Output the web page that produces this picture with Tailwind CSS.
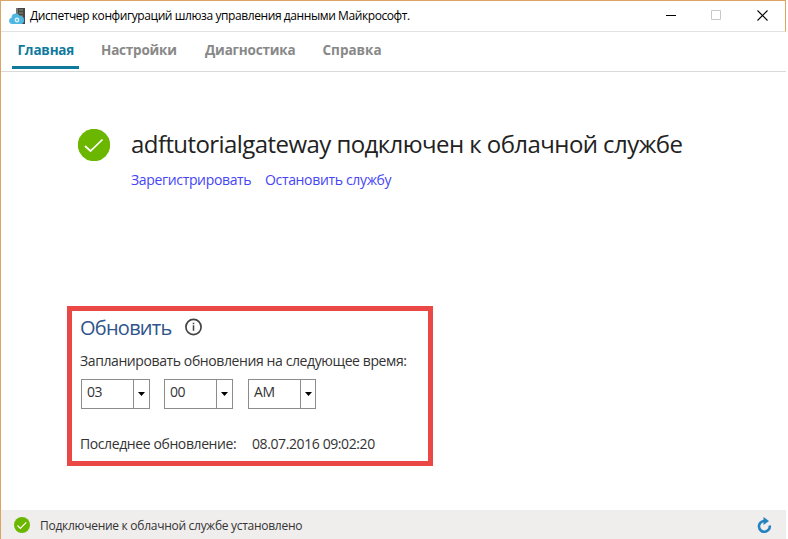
<!DOCTYPE html>
<html lang="ru">
<head>
<meta charset="utf-8">
<title>Диспетчер конфигураций шлюза управления данными Майкрософт.</title>
<script src="https://cdn.jsdelivr.net/npm/@tailwindcss/browser@4"></script>
</head>
<body class="bg-white overflow-hidden font-['Open_Sans','Noto_Sans',sans-serif] text-[#222]">
<div class="w-[786px] h-[539px] flex flex-col border-t border-l border-[#dba463] whitespace-nowrap">
  <header class="h-[31px] shrink-0 flex items-center border-r border-r-[#dba463] border-b border-b-[#e2e2e2] pl-2">
    <svg class="w-4 h-4 shrink-0 -mt-px" viewBox="0 0 16 16">
      <path d="M7 0h9v16H7z" fill="#454545"/><path d="M7 0h2v16H7z" fill="#777"/>
      <path d="M10 2h4M10 5h4M10 8h4" stroke="#8a9a70" stroke-width="1"/>
      <path d="M3 16a3.200 3.200 0 0 1-.5-6.300A4.500 4.500 0 0 1 11 8 4 4 0 0 1 15 12 3.800 3.800 0 0 1 13 16z" fill="#4fb8e2"/>
      <circle cx="8" cy="12" r="1.700" fill="none" stroke="#d9f1fb" stroke-width="1.400"/>
    </svg>
    <h1 class="ml-[5px] text-[12px] leading-4 tracking-[-0.41px] text-black">Диспетчер конфигураций шлюза управления данными Майкрософт.</h1>
    <div class="ml-auto mr-[17px] flex items-center">
      <svg class="w-[10px] h-[11px] mr-[35px]" viewBox="0 0 10 11" shape-rendering="crispEdges"><path d="M0 4.500h10" stroke="#000"/></svg>
      <svg class="w-[10px] h-[10px] mr-[36px] -mt-[2px]" viewBox="0 0 10 10"><path d="M.5.5h9v9h-9z" fill="none" stroke="#c8c8c8"/></svg>
      <svg class="w-[11px] h-[11px] -mt-px" viewBox="0 0 11 11"><path d="M.5.5l10 10M10.500.5l-10 10" stroke="#000" stroke-width="1.100"/></svg>
    </div>
  </header>
  <nav class="h-[40px] shrink-0 border-b border-[#d9d9d9] flex pl-[11px] text-[13.5px] leading-[37px] font-bold tracking-[-0.2px] text-[#888]">
    <span class="w-[67px] h-[37px] border-b-[3px] border-[#0f7a9d] text-[#0f7a9d] pl-[5.5px]"><span>Главная</span></span>
    <span class="w-[104px] ml-[22px]">Настройки</span>
    <span class="w-[117.5px]">Диагностика</span>
    <span class="tracking-normal">Справка</span>
  </nav>
  <main class="grow pl-[66px] pt-[56px]">
    <section class="h-[178px] pl-[11px] flex">
      <svg class="w-8 h-8 mt-px shrink-0" viewBox="0 0 32 32"><circle cx="16" cy="16" r="16.200" fill="#6bb700"/><path d="M7 17l5.500 5L24.500 10.500" fill="none" stroke="#fff" stroke-width="1.700"/></svg>
      <div class="ml-[21px]">
        <h2 class="text-[24px] leading-[32px] tracking-[-0.57px]"><span>adftutorialgateway подключен к облачной службе</span></h2>
        <div class="mt-[10px] flex text-[14px] leading-5 tracking-[-0.34px] text-[#4545f5]"><a class="w-[134px]"><span>Зарегистрировать</span></a><a>Остановить службу</a></div>
      </div>
    </section>
    <section class="w-[366px] h-[160px] border-[5px] border-[#ea4844] pl-[9px] pt-[5px] text-[14px] tracking-[-0.4px] text-[#333]">
      <div class="flex h-[26px]"><h3 class="-ml-px text-[20px] leading-[24px] tracking-[-0.75px] text-[#2f548c] w-[104px]"><span>Обновить</span></h3>
        <svg class="w-[18px] h-[18px] mt-[2px]" viewBox="0 0 18 18"><circle cx="9.500" cy="9" r="7.600" fill="none" stroke="#444" stroke-width="1.700"/><path d="M9.500 7.300v5.500M9.500 4.800v1.500" stroke="#444" stroke-width="1.500"/></svg>
      </div>
      <p class="-ml-px mt-[9px] leading-[19px]">Запланировать обновления на следующее время:</p>
      <div class="mt-[9px] flex leading-[24px]">
        <div class="w-[69px] h-[30px] border border-[#8c8c8c] flex"><span class="w-[51px] pl-[5px]">03</span><span class="grow border-l border-[#8c8c8c] flex items-center justify-center"><svg class="w-[7px] h-[4px]" viewBox="0 0 7 4"><path d="M0 0h7L3.500 4z"/></svg></span></div>
        <div class="w-[69px] h-[30px] ml-[14px] border border-[#8c8c8c] flex"><span class="w-[51px] pl-[5px]">00</span><span class="grow border-l border-[#8c8c8c] flex items-center justify-center"><svg class="w-[7px] h-[4px]" viewBox="0 0 7 4"><path d="M0 0h7L3.500 4z"/></svg></span></div>
        <div class="w-[68px] h-[30px] ml-[15px] border border-[#8c8c8c] flex"><span class="w-[51px] pl-[5px]">AM</span><span class="grow border-l border-[#8c8c8c] flex items-center justify-center"><svg class="w-[7px] h-[4px]" viewBox="0 0 7 4"><path d="M0 0h7L3.500 4z"/></svg></span></div>
      </div>
      <p class="-ml-px mt-[25px] leading-5 flex"><span class="w-[172px]">Последнее обновление:</span><span>08.07.2016 09:02:20</span></p>
    </section>
  </main>
  <footer class="h-[29px] shrink-0 bg-[#f0eded] flex items-center pl-[13px] pr-[14px] text-[12px] leading-5 tracking-[-0.28px] text-[#333]">
    <svg class="w-4 h-4 shrink-0" viewBox="0 0 16 16"><circle cx="8" cy="8" r="8" fill="#6bb700"/><path d="M3.500 8.500l2.800 2.800 6-6" fill="none" stroke="#fff" stroke-width="1.200"/></svg>
    <span class="ml-[10px] pt-[2px]">Подключение к облачной службе установлено</span>
    <svg class="ml-auto w-[15px] h-4" viewBox="0 0 15 16"><path d="M8 4H7A5.400 5.400 0 1 0 12.700 8.500" fill="none" stroke="#2382c0" stroke-width="2.600"/><path d="M6.500 0L12 4 6.500 8z" fill="#2382c0"/></svg>
  </footer>
</div>
</body>
</html>
